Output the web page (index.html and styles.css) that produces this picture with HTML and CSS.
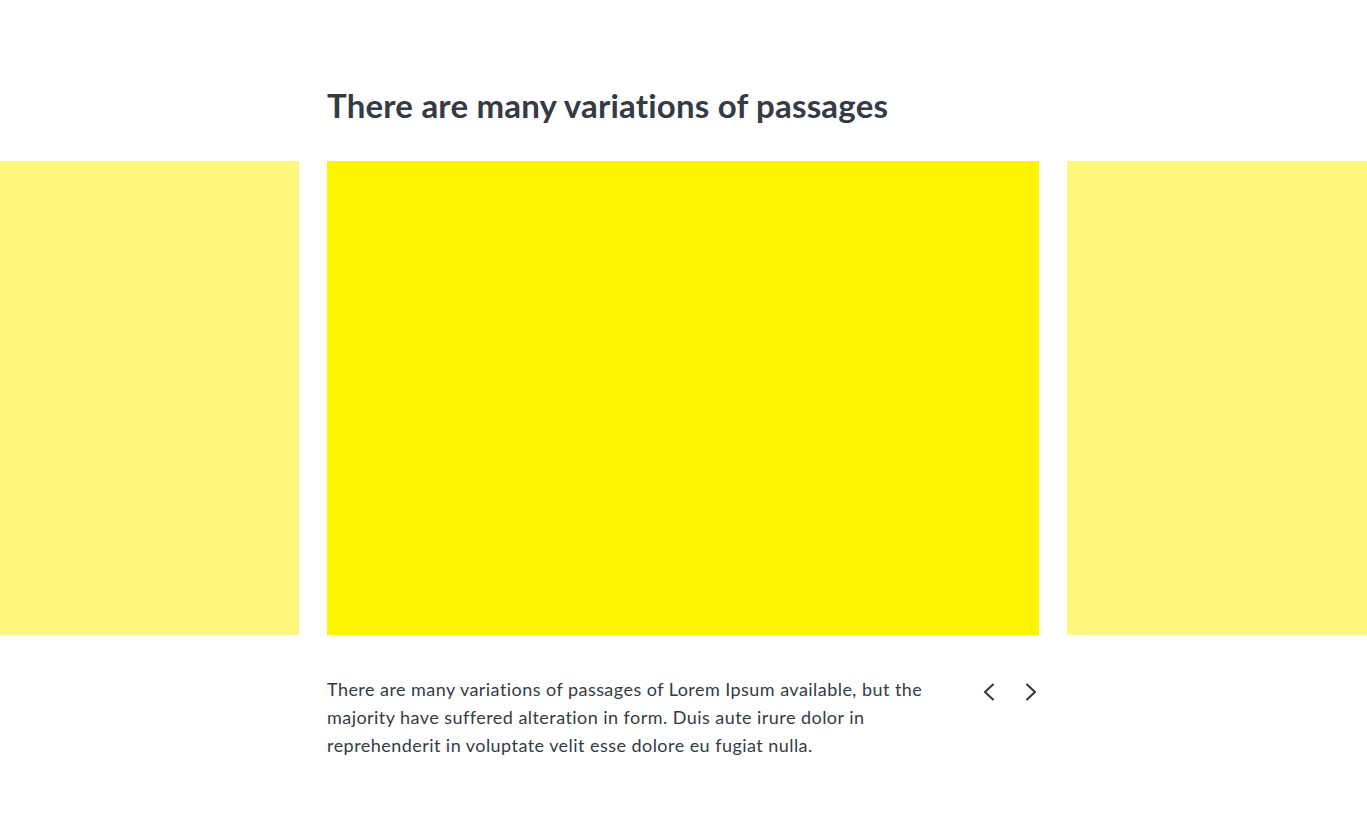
FILE: index.html
```html
<!DOCTYPE html>
<html lang="en">
<head>
<meta charset="utf-8">
<title>Carousel</title>
<link rel="stylesheet" href="styles.css">
</head>
<body>
<section class="carousel">
  <div class="container">
    <h2 class="title">There are many variations of passages</h2>
  </div>
  <div class="track">
    <div class="slide slide-side"></div>
    <div class="slide slide-active"></div>
    <div class="slide slide-side"></div>
  </div>
  <div class="container caption-row">
    <p class="caption">There are many variations of passages of Lorem Ipsum available, but the majority have suffered alteration in form. Duis aute irure dolor in reprehenderit in voluptate velit esse dolore eu fugiat nulla.</p>
    <div class="controls">
      <button class="nav-btn" aria-label="Previous">
        <svg width="16" height="20" viewBox="0 0 16 20"><path d="M12 2.5 L4 10 L12 17.5" fill="none" stroke="#2f3640" stroke-width="2" stroke-linecap="round" stroke-linejoin="round"/></svg>
      </button>
      <button class="nav-btn" aria-label="Next">
        <svg width="16" height="20" viewBox="0 0 16 20"><path d="M4 2.5 L12 10 L4 17.5" fill="none" stroke="#2f3640" stroke-width="2" stroke-linecap="round" stroke-linejoin="round"/></svg>
      </button>
    </div>
  </div>
</section>
</body>
</html>
```
FILE: styles.css
```css
* { box-sizing: border-box; }
html, body {
  margin: 0;
  padding: 0;
  background: #ffffff;
}
body {
  font-family: Lato, "Open Sans", sans-serif;
  color: #353b45;
  font-variant-ligatures: none;
}
.carousel {
  padding-top: 86px;
  overflow: hidden;
}
.container {
  width: 712px;
  margin: 0 auto;
  position: relative;
  left: -0.5px;
}
.title {
  margin: 0 0 36px;
  font-size: 33px;
  line-height: 39px;
  font-weight: 700;
  letter-spacing: 0.2px;
  color: #353b45;
}
.track {
  display: flex;
  justify-content: center;
  gap: 28px;
  position: relative;
  left: -0.5px;
}
.slide {
  flex: 0 0 712px;
  height: 474px;
}
.slide-active { background: #fdf400; }
.slide-side { background: #fef77e; }
.caption-row {
  display: flex;
  justify-content: space-between;
  align-items: flex-start;
  margin-top: 40px;
}
.caption {
  margin: 0;
  width: 630px;
  font-size: 18px;
  line-height: 28px;
  letter-spacing: 0.45px;
  color: #353b45;
}
.controls {
  display: flex;
  gap: 26px;
  padding-top: 7px;
}
.nav-btn {
  border: 0;
  background: none;
  padding: 0;
  width: 16px;
  height: 20px;
  display: flex;
  align-items: center;
  justify-content: center;
  cursor: pointer;
}
```
